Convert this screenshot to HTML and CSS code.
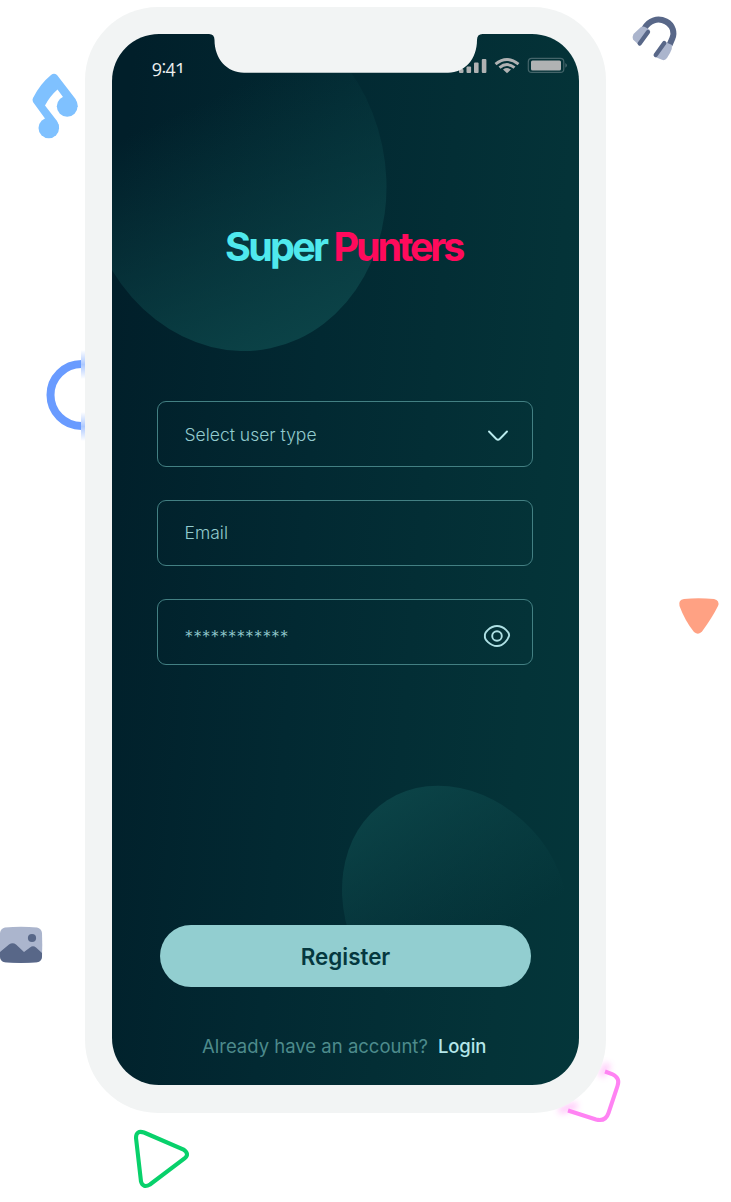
FILE: index.html
```html
<!DOCTYPE html>
<html lang="en">
<head>
<meta charset="utf-8">
<title>Super Punters</title>
<link rel="stylesheet" href="styles.css">
</head>
<body>
<main class="stage">
  <svg class="shapes" viewBox="0 0 731 1202" aria-hidden="true">
    <defs><filter id="soft" x="-50%" y="-50%" width="200%" height="200%"><feGaussianBlur stdDeviation="3"/></filter>
    <linearGradient id="fadeBlue" x1="0" y1="0" x2="0" y2="1"><stop offset="0" stop-color="#699bff" stop-opacity="0"/><stop offset=".5" stop-color="#699bff" stop-opacity=".55"/><stop offset="1" stop-color="#699bff" stop-opacity="0"/></linearGradient></defs>
    <g fill="#7fc1ff"><path d="M51 75Q54 72.500 57 75L75.500 99Q78 103 77.500 107L67 107L63 97L57.500 89.500Q50 96 45 105.500L57 121Q59.500 125 59 129L48 129L45 118.500L33 102Q32 99.500 33 98Q40 84 51 75Z"/><circle cx="67.200" cy="106.300" r="10.400"/><circle cx="48.800" cy="128" r="10.300"/></g>
    <path d="M644.500 28.500C649 20 658 17.500 666 21.500C673.500 25.500 674.500 33 672.500 38L669.500 45" fill="none" stroke="#586788" stroke-width="6"/>
    <path d="M641 27Q643 26 646 27.500L650 30L639.500 45.500L633 39.500Q632 37 633.500 34ZM664 41.500L672 45Q672.500 49 670 53L667 58Q665 61 662 59.800L654 56.500Z" fill="#abb5cd"/>
    <path d="M648 32L639.700 43.500M664.300 43L655.700 55" fill="none" stroke="#586788" stroke-width="4.300" stroke-linecap="round"/>
    <path d="M81.500 364A31 31 0 0 0 81.500 426" fill="none" stroke="#699bff" stroke-width="8"/>
    <path d="M81 350H85V379H81ZM81 412H85V441H81Z" fill="#fff"/>
    <path d="M81 350H85V379H81Z" fill="url(#fadeBlue)"/><path d="M81 412H85V441H81Z" fill="url(#fadeBlue)"/>
    <path d="M684 599Q698 597.500 714 599Q720 600.500 718 606Q712 618 702 631.500Q698.500 635.500 694 632Q685 621 679.500 606Q678 600 684 599Z" fill="#ffa183"/>
    <path d="M5 927.500Q21 926 37 927.500Q41.500 928.500 42 933Q42.500 945 42 957Q41.500 961.500 37 962.300Q21 963.700 5 962.300Q.5 961.500 0 957V933Q.5 928.500 5 927.500Z" fill="#abb5cd"/>
    <circle cx="32" cy="938" r="4.100" fill="#586788"/>
    <path d="M0 952L9 944.500Q12.700 942 16 944.500L24 952L30 947.500Q33 945 36 947.500L42 953V957Q41.500 961.500 37 962.300Q21 963.700 5 962.300Q.5 961.500 0 957Z" fill="#586788"/>
    <path d="M605 1071.500L612 1074Q620.500 1078 617.500 1086L608.500 1113Q605.500 1122 596 1119.500L568 1110.500" fill="none" stroke="#ff83f3" stroke-width="4"/>
    <path d="M601 1076L608 1064M559 1111L577 1105" stroke="#ff83f3" stroke-width="7" opacity=".45" filter="url(#soft)"/>
    <path d="M144 1132.500L183.500 1149.500Q190 1154 184.500 1158.500L150 1184.500Q143 1188.500 141 1181.500L136 1138Q136 1130 144 1132.500Z" fill="none" stroke="#08d16b" stroke-width="4.100"/>
  </svg>
  <section class="phone">
    <div class="screen">
      <svg class="glow" viewBox="0 0 467 1051" aria-hidden="true">
        <defs>
          <linearGradient id="top" gradientUnits="userSpaceOnUse" x1="75" y1="75" x2="185" y2="317"><stop offset="0" stop-color="#0c4549" stop-opacity="0"/><stop offset="1" stop-color="#0c4549" stop-opacity=".94"/></linearGradient>
          <linearGradient id="low" gradientUnits="userSpaceOnUse" x1="270" y1="765" x2="358" y2="915"><stop offset="0" stop-color="#0d484b" stop-opacity=".8"/><stop offset="1" stop-color="#0d484b" stop-opacity="0"/></linearGradient>
        </defs>
        <path d="M-24.870 172.770A150.700 175.800 -11.700 0 0 270.270 111.630A150.700 175.800 -11.700 0 0 -24.870 172.770Z" fill="url(#top)"/>
        <path d="M252.200 932.700A108.900 131.900 -32.500 0 0 435.800 815.700A108.900 131.900 -32.500 0 0 252.200 932.700Z" fill="url(#low)"/>
      </svg>
      <header class="status"><span class="clock">9:41</span>
        <svg class="signals" viewBox="0 0 110 18" width="110" height="18" aria-label="Signal, wifi and battery">
          <g fill="#b0b2b3"><rect x="0" y="13" width="4.500" height="4" rx="1"/><rect x="7.500" y="10.500" width="4.600" height="6.500" rx="1"/><rect x="15" y="6.500" width="4.600" height="10.500" rx="1"/><rect x="22.800" y="3" width="4.600" height="14" rx="1"/>
          <path d="M44 13.500Q48 10.700 52 13.500L48 17.300Z"/></g>
          <path d="M36.500 8.200Q48 -1.200 59.500 8.200M40.500 11.700Q48 5.500 55.500 11.700" fill="none" stroke="#b0b2b3" stroke-width="2.900"/>
          <rect x="69.300" y="2.400" width="35.500" height="14" rx="3.500" fill="none" stroke="#44656a" stroke-width="1.200"/><rect x="72" y="4.400" width="30" height="10" rx="1.500" fill="#b0b2b3"/><path d="M106.300 7Q109.800 9.300 106.300 11.800Z" fill="#44656a"/>
        </svg>
      </header>
      <h1 class="brand"><span class="super">Super</span><span class="punters">Punters</span></h1>
      <form class="form">
        <div class="field"><span class="label type">Select user type</span><svg class="chevron" width="22" height="14" viewBox="0 0 22 14"><path d="M2 2.500L9.300 10Q11 11.500 12.700 10L20 2.500" fill="none" stroke="#bbebee" stroke-width="1.900" stroke-linecap="round"/></svg></div>
        <div class="field"><span class="label email">Email</span></div>
        <div class="field"><span class="label stars">************</span><svg class="eye" width="28" height="24" viewBox="0 0 28 24"><path d="M2 12C1 9 7 2 14 2S27 9 26 12S21 22 14 22S1 15 2 12Z" fill="none" stroke="#aee0e4" stroke-width="1.900"/><circle cx="14" cy="12" r="4.800" fill="none" stroke="#aee0e4" stroke-width="1.900"/></svg></div>
      </form>
      <button class="register" type="button">Register</button>
      <p class="account"><span>Already have an account?</span><a class="login">Login</a></p>
      <svg class="notch" viewBox="0 0 280 39" aria-hidden="true"><path d="M0 0H3Q8.500 0 8.500 6C8.500 25 21 38.700 38 38.700H242C259 38.700 271 25 271 6Q271 0 276.500 0H280Z" fill="#f2f4f4"/></svg>
    </div>
  </section>
</main>
</body>
</html>
```
FILE: styles.css
```css
* { box-sizing: border-box; }
body { margin: 0; background: #fff; font-family: Inter, sans-serif; overflow: hidden; }
.stage { position: relative; width: 731px; height: 1202px; padding: 7px 0 0 85px; }
.shapes { position: absolute; inset: 0; width: 731px; height: 1202px; }
.phone { position: relative; width: 521px; height: 1106px; padding: 27px; border-radius: 73px; background: #f2f4f4; }
.screen { position: relative; display: flex; flex-direction: column; width: 467px; height: 1051px; padding: 0 45px; overflow: hidden; border-radius: 47px; background: linear-gradient(95deg, #011f2a 4%, #022932 42%, #043338 84%, #04363a); }
.glow { position: absolute; inset: 0; width: 467px; height: 1051px; }
.status, .brand, .form, .register, .account { position: relative; }
.status { display: flex; justify-content: space-between; height: 60px; padding: 22px 0 0; margin-right: -35px; }
.clock { margin: -1px 0 0 -5px; color: #eceeee; font: 18px/22px "Open Sans", sans-serif; font-feature-settings: "onum"; letter-spacing: -.4px; }
.signals { flex: none; }
.brand { display: flex; gap: 7px; margin: 126px 0 0 68px; height: 54px; font: 700 39.5px/54px Inter, sans-serif; letter-spacing: -2.7px; white-space: nowrap; }
.super { color: #4fe9ed; }
.punters { color: #ff0a5c; letter-spacing: -3.1px; }
.form { display: flex; flex-direction: column; gap: 33px; margin-top: 127px; }
.field { display: flex; align-items: center; justify-content: space-between; width: 376px; height: 66px; padding: 0 22.6px 0 26.5px; border: 1.4px solid #438083; border-radius: 9px; color: #92cbce; font-size: 17.5px; font-weight: 300; }
.label { white-space: nowrap; }
.email { margin-top: -1px; }
.stars { margin-top: 8px; letter-spacing: -.1px; }
.chevron { margin-top: 4px; }
.field .eye { margin: 7px -2px 0 0; }
.register { width: 371px; height: 62px; margin: 260px 0 0 3px; padding: 2px 0 0; border: 0; border-radius: 31px; background: #92ced0; color: #05383f; font: 600 22.4px/60px Inter, sans-serif; }
.account { display: flex; gap: 10px; margin: 46px 0 0 45px; color: #4d8b8c; font-size: 18.5px; line-height: 26px; white-space: nowrap; }
.login { color: #b4e7ea; font-weight: 500; letter-spacing: -.1px; }
.notch { position: absolute; top: 0; left: 94px; width: 280px; height: 39px; }
```
